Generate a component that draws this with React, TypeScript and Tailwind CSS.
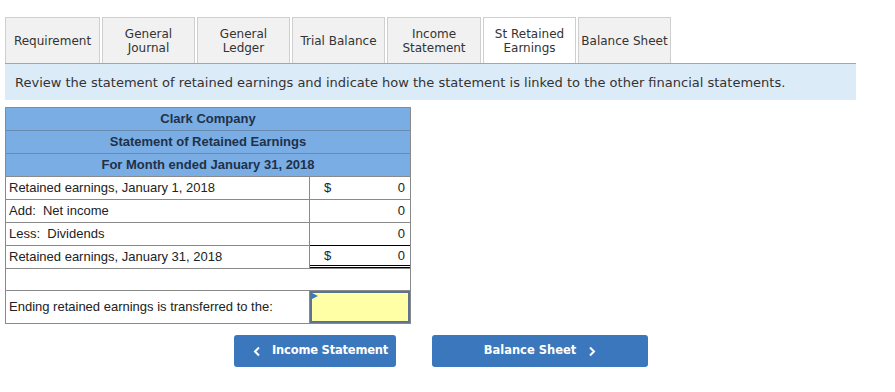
import React from 'react';

const tabs = [
  { label: ['Requirement'], w: 'w-[95px]' },
  { label: ['General', 'Journal'], w: 'w-[93px]' },
  { label: ['General', 'Ledger'], w: 'w-[93px]' },
  { label: ['Trial Balance'], w: 'w-[93px]' },
  { label: ['Income', 'Statement'], w: 'w-[94px]' },
  { label: ['St Retained', 'Earnings'], w: 'w-[93px]', active: true },
  { label: ['Balance Sheet'], w: 'w-[93px]' },
];

const rows = [
  { label: 'Retained earnings, January 1, 2018', dollar: true },
  { label: 'Add:  Net income' },
  { label: 'Less:  Dividends' },
  { label: 'Retained earnings, January 31, 2018', dollar: true, total: true },
];

const App: React.FC = () => {
  return (
    <div className="w-[895px] h-[392px] bg-white pl-[5px] pt-[17px] text-[#333]">
      {/* tab strip */}
      <div className="flex w-[851px] gap-[2px] border-b border-[#a5a5a5] font-['DejaVu_Sans',sans-serif] text-[12px] leading-[14px]">
        {tabs.map((t) => (
          <div
            key={t.label.join(' ')}
            className={`${t.w} h-[46px] flex flex-col items-center justify-center border border-b-0 border-[#cfcfcf] text-center ${
              t.active ? 'bg-white' : 'bg-[#f1f1f1]'
            }`}
          >
            {t.label.map((l) => (
              <span key={l}>{l}</span>
            ))}
          </div>
        ))}
      </div>

      <div className="w-[851px] h-[36px] bg-[#dcebf8] pl-[10px] pt-[2px] flex items-center font-['DejaVu_Sans',sans-serif] text-[13px] text-[#333]">
        Review the statement of retained earnings and indicate how the statement is linked to the other financial statements.
      </div>

      {/* statement */}
      <div className="mt-[7px] w-[406px] border border-[#8a8a8a] font-['Liberation_Sans',Arial,sans-serif] text-[13px] text-[#222]">
        {['Clark Company', 'Statement of Retained Earnings', 'For Month ended January 31, 2018'].map((h, i) => (
          <div
            key={h}
            className={`flex items-center justify-center bg-[#79ade4] font-bold text-[#1f3149] ${
              i > 0 ? 'h-[23px] border-t border-[#6a8bb0]' : 'h-[22px]'
            }`}
          >
            {h}
          </div>
        ))}
        {rows.map((r) => (
          <div key={r.label} className="flex h-[23px] border-t border-[#8a8a8a]">
            <div className="w-[304px] pl-[3px] flex items-center whitespace-pre border-r border-[#8a8a8a]">{r.label}</div>
            <div
              className={`flex-1 flex items-center justify-between pl-[14px] pr-[5px] ${
                r.total ? 'border-t border-black border-b-[3px] border-b-black [border-bottom-style:double] mt-[-1px]' : ''
              }`}
            >
              <span>{r.dollar ? '$' : ''}</span>
              <span>0</span>
            </div>
          </div>
        ))}
        <div className="h-[22px] border-t border-[#8a8a8a]" />
        <div className="flex h-[33px] border-t border-[#8a8a8a]">
          <div className="w-[304px] pl-[3px] flex items-center border-r border-[#8a8a8a]">
            Ending retained earnings is transferred to the:
          </div>
          <div className="relative flex-1 bg-[#ffffa6] border-2 border-[#5b7590]">
            <svg className="absolute left-0 top-0" width="6" height="6" viewBox="0 0 6 6">
              <polygon points="0,0 6,3 0,6" fill="#3a78c0" />
            </svg>
          </div>
        </div>
      </div>

      {/* nav buttons */}
      <div className="flex mt-[11px] ml-[229px] gap-[36px] font-['DejaVu_Sans',sans-serif] text-[11.5px] font-bold text-white whitespace-nowrap">
        <button className="w-[162px] h-[32px] rounded-[3px] bg-[#3a77bd] flex items-center pl-[19px] gap-[11px] tracking-[-0.2px]">
          <svg width="8" height="11" viewBox="0 0 8 11">
            <path d="M6 1.5 L2 5.5 L6 9.5" stroke="white" strokeWidth="2" fill="none" />
          </svg>
          <span>Income Statement</span>
        </button>
        <button className="w-[216px] h-[32px] rounded-[3px] bg-[#3a77bd] flex items-center justify-center gap-[12px]">
          <span>Balance Sheet</span>
          <svg width="8" height="11" viewBox="0 0 8 11">
            <path d="M2 1.5 L6 5.5 L2 9.5" stroke="white" strokeWidth="2" fill="none" />
          </svg>
        </button>
      </div>
    </div>
  );
};

export default App;
